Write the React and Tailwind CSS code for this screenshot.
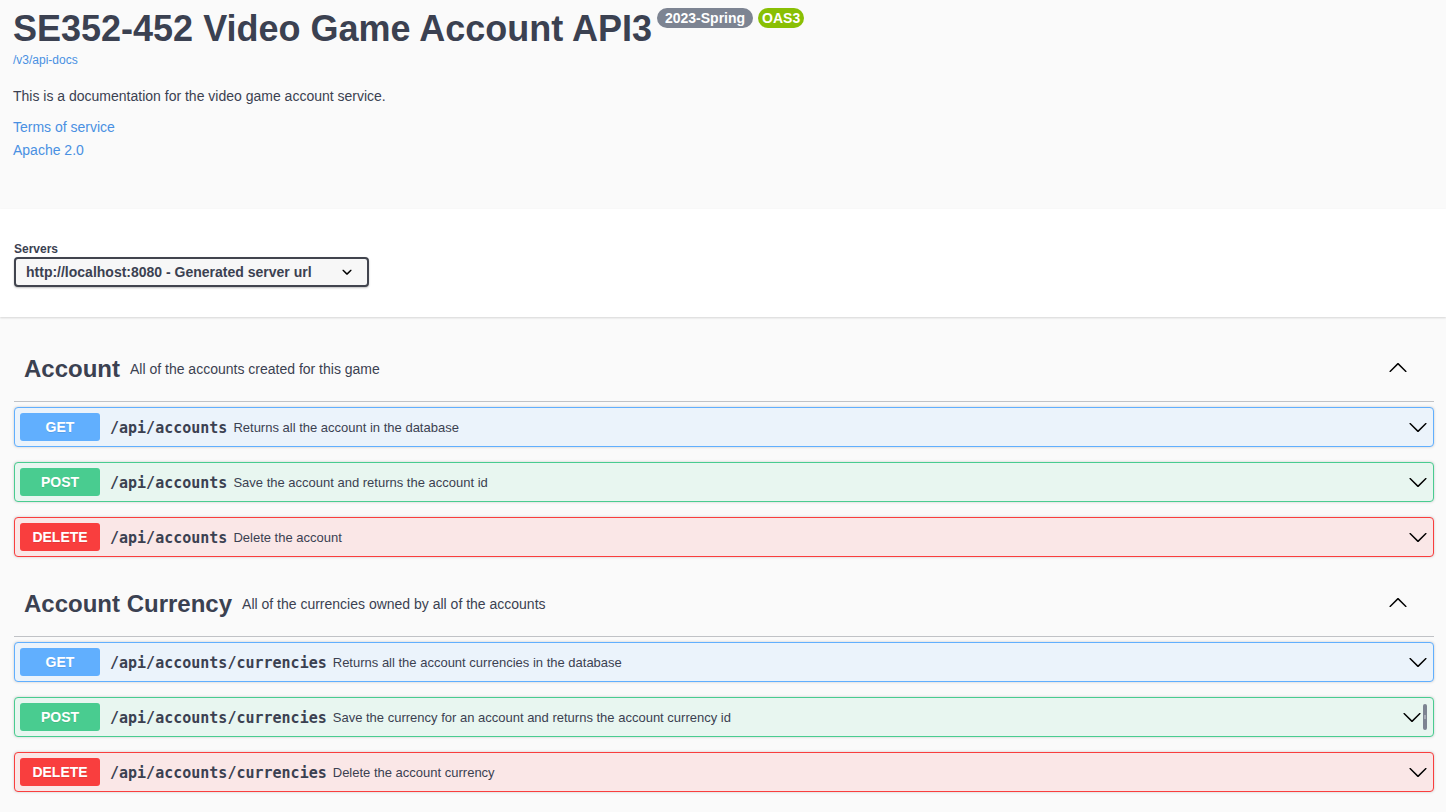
const DOWN =
  "M17.418 6.109c.272-.268.709-.268.979 0s.271.701 0 .969l-7.908 7.83c-.27.268-.707.268-.979 0l-7.908-7.83c-.27-.268-.27-.701 0-.969.271-.268.709-.268.979 0L10 13.25z";
const UP =
  "M17.418 14.908C17.69 15.176 18.127 15.176 18.397 14.908C18.667 14.64 18.668 14.207 18.397 13.939L10.489 6.109C10.219 5.841 9.782 5.841 9.51 6.109L1.602 13.939C1.332 14.207 1.332 14.64 1.602 14.908C1.873 15.176 2.311 15.176 2.581 14.908L10 7.767L17.418 14.908Z";

const METHODS = {
  GET: { row: "border-[#61affe] bg-[#ebf3fb]", badge: "bg-[#61affe]" },
  POST: { row: "border-[#49cc90] bg-[#e8f6f0]", badge: "bg-[#49cc90]" },
  DELETE: { row: "border-[#f93e3e] bg-[#fae7e7]", badge: "bg-[#f93e3e]" },
};

const SECTIONS = [
  {
    name: "Account",
    description: "All of the accounts created for this game",
    operations: [
      { method: "GET", path: "/api/accounts", summary: "Returns all the account in the database" },
      { method: "POST", path: "/api/accounts", summary: "Save the account and returns the account id" },
      { method: "DELETE", path: "/api/accounts", summary: "Delete the account" },
    ],
  },
  {
    name: "Account Currency",
    description: "All of the currencies owned by all of the accounts",
    operations: [
      { method: "GET", path: "/api/accounts/currencies", summary: "Returns all the account currencies in the database" },
      {
        method: "POST",
        path: "/api/accounts/currencies",
        summary: "Save the currency for an account and returns the account currency id",
        scrollbar: true,
      },
      { method: "DELETE", path: "/api/accounts/currencies", summary: "Delete the account currency" },
    ],
  },
];

function Arrow({ d }) {
  return (
    <svg viewBox="0 0 20 20" className="h-5 w-5 shrink-0 fill-black" aria-hidden="true">
      <path d={d} />
    </svg>
  );
}

function Operation({ method, path, summary, scrollbar }) {
  const style = METHODS[method];
  return (
    <button
      type="button"
      className={`flex w-full items-center rounded-[4px] border p-[5px] text-left shadow-[0_0_3px_rgba(0,0,0,0.19)] ${style.row}`}
    >
      <span
        className={`w-20 shrink-0 rounded-[3px] text-center text-sm leading-7 font-bold text-white [text-shadow:0_1px_0_rgba(0,0,0,0.1)] ${style.badge}`}
      >
        {method}
      </span>
      <span className="flex min-w-0 flex-1 items-center gap-1.5 pt-0.5 pl-2.5">
        <span className="font-['DejaVu_Sans_Mono',monospace] text-[15px] leading-5 font-bold">{path}</span>
        <span className="min-w-0 flex-1 text-[13px] leading-5">{summary}</span>
      </span>
      <Arrow d={DOWN} />
      {scrollbar && (
        <span className="mx-px flex h-[26px] w-1 shrink-0 items-center justify-center rounded-sm bg-[#7d8492]">
          <span className="h-1 w-0.5 bg-[#a5aab4]" />
        </span>
      )}
    </button>
  );
}

function Section({ name, description, operations }) {
  return (
    <section className="mb-[13px]">
      <h2 className="mb-[5px] flex items-center border-b border-[#3b4151]/30 pt-[18px] pr-[26px] pb-4 pl-2.5">
        <a href="#operations" className="text-2xl leading-8 font-bold">
          {name}
        </a>
        <span className="flex-1 px-2.5 text-sm leading-8 font-normal">{description}</span>
        <button type="button" className="pb-1" aria-label={`Collapse ${name}`}>
          <Arrow d={UP} />
        </button>
      </h2>
      <div className="flex flex-col gap-[15px]">
        {operations.map((operation) => (
          <Operation key={operation.method} {...operation} />
        ))}
      </div>
    </section>
  );
}

export default function App() {
  return (
    <div className="min-h-screen bg-[#fafafa] font-['Liberation_Sans',Arial,sans-serif] text-[#3b4151]">
      <header className="flex flex-col items-start pt-2 pr-3 pb-[47px] pl-[13px]">
        <h1 className="flex items-start gap-[5px] text-4xl leading-[42px] font-bold">
          SE352-452 Video Game Account API3
          <span className="rounded-full bg-[#7d8492] px-2 text-sm leading-5 text-white">2023-Spring</span>
          <span className="rounded-full bg-[#89bf04] px-1 text-sm leading-5 text-white">OAS3</span>
        </h1>
        <a href="#api-docs" className="mt-0.5 text-xs leading-4 text-[#4990e2]">
          /v3/api-docs
        </a>
        <p className="mt-[18px] text-sm leading-5">This is a documentation for the video game account service.</p>
        <a href="#terms" className="mt-2.5 text-sm leading-[23px] text-[#4990e2]">
          Terms of service
        </a>
        <a href="#license" className="text-sm leading-[23px] text-[#4990e2]">
          Apache 2.0
        </a>
      </header>

      <div className="flex flex-col items-start bg-white pt-8 pr-3 pb-[30px] pl-[14px] shadow-[0_1px_2px_rgba(0,0,0,0.15)]">
        <label htmlFor="servers" className="text-xs leading-4 font-bold">
          Servers
        </label>
        <div className="grid items-center">
          <select
            id="servers"
            className="col-start-1 row-start-1 h-[30px] w-[355px] appearance-none rounded-[4px] border-2 border-[#41444e] bg-[#f7f7f7] pr-10 pl-2.5 text-sm font-bold shadow-[0_1px_2px_rgba(0,0,0,0.25)]"
          >
            <option>http://localhost:8080 - Generated server url</option>
          </select>
          <svg
            viewBox="0 0 20 20"
            className="pointer-events-none col-start-1 row-start-1 mr-3 h-5 w-5 justify-self-end fill-black"
            aria-hidden="true"
          >
            <path d="M13.418 7.859c.271-.268.709-.268.978 0 .27.268.272.701 0 .969l-3.908 3.83c-.27.268-.707.268-.979 0l-3.908-3.83c-.27-.267-.27-.701 0-.969.271-.268.709-.268.978 0L10 11z" />
          </svg>
        </div>
      </div>

      <main className="pt-[18px] pr-3 pl-[14px]">
        {SECTIONS.map((section) => (
          <Section key={section.name} {...section} />
        ))}
      </main>
    </div>
  );
}
